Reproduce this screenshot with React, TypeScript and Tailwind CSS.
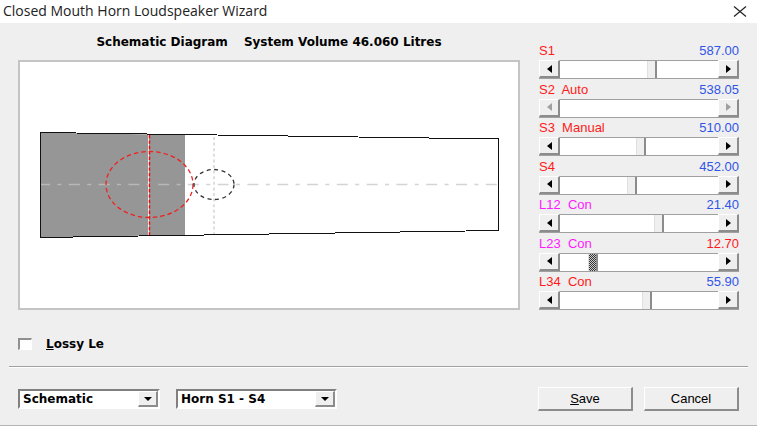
import React, { useState } from 'react';

type Param = {
    id: string;
    label: string;
    value: string;
    position: number;
    labelColor: string;
    valueColor: string;
    disabled?: boolean;
    focused?: boolean;
};

const params: Param[] = [
    { id: 's1', label: 'S1', value: '587.00', position: 590, labelColor: 'text-[#ff1a1a]', valueColor: 'text-[#2f55e8]' },
    { id: 's2', label: 'S2  Auto', value: '538.05', position: 0, labelColor: 'text-[#ff1a1a]', valueColor: 'text-[#2f55e8]', disabled: true },
    { id: 's3', label: 'S3  Manual', value: '510.00', position: 515, labelColor: 'text-[#ff1a1a]', valueColor: 'text-[#2f55e8]' },
    { id: 's4', label: 'S4', value: '452.00', position: 455, labelColor: 'text-[#ff1a1a]', valueColor: 'text-[#2f55e8]' },
    { id: 'l12', label: 'L12  Con', value: '21.40', position: 632, labelColor: 'text-[#ff1aff]', valueColor: 'text-[#2f55e8]' },
    { id: 'l23', label: 'L23  Con', value: '12.70', position: 192, labelColor: 'text-[#ff1aff]', valueColor: 'text-[#ff1a1a]', focused: true },
    { id: 'l34', label: 'L34  Con', value: '55.90', position: 557, labelColor: 'text-[#ff1a1a]', valueColor: 'text-[#2f55e8]' },
];

const raised = 'border-t border-l border-b-2 border-r-2 border-t-white border-l-white border-b-[#8c8c8c] border-r-[#8c8c8c] bg-[#efefef]';

const boldText = "font-['DejaVu_Sans',Verdana,sans-serif] text-[12px] font-bold";

const ArrowButton = ({ direction, label, disabled }: { direction: 'left' | 'right'; label: string; disabled?: boolean }) => (
    <button
        type="button"
        aria-label={label}
        disabled={disabled}
        className={`flex h-full w-[21px] shrink-0 items-center justify-center ${raised} ${disabled ? 'text-[#a0a0a0]' : 'text-black'}`}
    >
        <svg width="5" height="8" viewBox="0 0 5 8" fill="currentColor" aria-hidden="true">
            <path d={direction === 'left' ? 'M5 0v8L0 4z' : 'M0 0v8l5-4z'} />
        </svg>
    </button>
);

const ParamSlider = ({ param }: { param: Param }) => {
    const [position, setPosition] = useState(param.position);
    const thumb = param.focused
        ? '[&::-webkit-slider-thumb]:bg-[repeating-conic-gradient(#333_0_25%,#ccc_0_50%)] [&::-webkit-slider-thumb]:bg-size-[2px_2px]'
        : '[&::-webkit-slider-thumb]:bg-[#efefef]';

    return (
        <div>
            <div className="flex h-[19px] items-center justify-between text-[13px] leading-[19px]">
                <label htmlFor={param.id} className={`whitespace-pre ${param.labelColor}`}>{param.label}</label>
                <output htmlFor={param.id} className={param.valueColor}>{param.value}</output>
            </div>
            <div className="flex h-[19px] border-b border-[#a0a0a0]">
                <ArrowButton direction="left" label={`Decrease ${param.label}`} disabled={param.disabled} />
                <input
                    id={param.id}
                    type="range"
                    min={0}
                    max={1000}
                    value={position}
                    disabled={param.disabled}
                    onChange={(e) => setPosition(Number(e.target.value))}
                    className={`h-full min-w-0 flex-1 appearance-none border-t border-[#a0a0a0] bg-white [&::-webkit-slider-thumb]:h-[17px] [&::-webkit-slider-thumb]:w-[10px] [&::-webkit-slider-thumb]:appearance-none [&::-webkit-slider-thumb]:border-r-2 [&::-webkit-slider-thumb]:border-l [&::-webkit-slider-thumb]:border-l-[#e0e0e0] [&::-webkit-slider-thumb]:border-r-[#8c8c8c] disabled:[&::-webkit-slider-thumb]:opacity-0 ${thumb}`}
                />
                <ArrowButton direction="right" label={`Increase ${param.label}`} disabled={param.disabled} />
            </div>
        </div>
    );
};

const HornDiagram = () => (
    <svg viewBox="0 0 498 246" className="block w-full bg-white" role="img" aria-label="Horn schematic" fill="none">
        <path d="M20 70.5 L165 73 V173 L20 175.5z" fill="#969696" />
        {/* Axis and driver centre lines */}
        <path d="M20 122.5H165" stroke="#b8b8b8" strokeWidth="1.5" strokeDasharray="11 7.4 4 7.4" strokeDashoffset="1" />
        <path d="M165 122.5H478" stroke="#d4d4d4" strokeWidth="1.5" strokeDasharray="11 7.4 4 7.4" strokeDashoffset="27" />
        <path d="M194 75V172" stroke="#d4d4d4" strokeWidth="1.5" strokeDasharray="3 2.6" />
        {/* Horn outline */}
        <path d="M20.5 70.5 L478.5 77 V168.5 L20.5 175.5z" stroke="#111" shapeRendering="crispEdges" />
        <path d="M128.5 73V173" stroke="#f4f4f4" />
        <path d="M129.5 73V173" stroke="#ff0000" strokeWidth="1.4" strokeDasharray="3.4 2" />
        <ellipse cx="129.5" cy="122.5" rx="43.5" ry="33" stroke="#f02020" strokeWidth="1.3" strokeDasharray="4.5 3" />
        <ellipse cx="194" cy="122.5" rx="20" ry="15" stroke="#333" strokeWidth="1.3" strokeDasharray="4 3.5" />
    </svg>
);

const ComboBox = ({ label, options, width }: { label: string; options: string[]; width: string }) => (
    <div className={`relative h-5 ${width}`}>
        <select
            aria-label={label}
            className={`block h-full w-full appearance-none border-2 border-t-[#808080] border-r-white border-b-white border-l-[#808080] bg-white pl-[3px] leading-4 text-black ${boldText}`}
        >
            {options.map((option) => (
                <option key={option}>{option}</option>
            ))}
        </select>
        <span className={`pointer-events-none absolute top-0.5 right-0.5 flex h-4 w-5 items-center justify-center ${raised}`}>
            <svg width="8" height="4" viewBox="0 0 8 4" aria-hidden="true">
                <path d="M0 0h8L4 4z" />
            </svg>
        </span>
    </div>
);

const App = () => {
    return (
        <div className="min-h-screen border-b border-[#b4b4b4] bg-[#efefef] font-['Liberation_Sans',Arial,sans-serif] text-black">
            <header className="flex h-[23px] items-center justify-between bg-white pr-[10px] pl-[3px]">
                <h1 className="pb-0.5 font-['Open_Sans',sans-serif] text-[14px] leading-5 text-[#222]">Closed Mouth Horn Loudspeaker Wizard</h1>
                <button type="button" aria-label="Close" className="flex items-center">
                    <svg width="14" height="11" viewBox="0 0 14 11" stroke="#222" strokeWidth="1.2" aria-hidden="true">
                        <path d="M1 .5l12 10M13 .5l-12 10" />
                    </svg>
                </button>
            </header>

            <main className="flex gap-[19px] px-[18px]">
                <section className="min-w-0 flex-1">
                    <h2 className={`flex h-[37px] items-center justify-center gap-4 ${boldText}`}>
                        <span>Schematic Diagram</span>
                        <span>System Volume 46.060 Litres</span>
                    </h2>
                    <div className="border-2 border-[#c4c4c4]">
                        <HornDiagram />
                    </div>
                </section>
                <section className="flex w-[200px] shrink-0 flex-col justify-between pt-[18px]">
                    {params.map((param) => (
                        <ParamSlider key={param.id} param={param} />
                    ))}
                </section>
            </main>

            <div className="flex h-14 items-center gap-[14px] px-[18px] pt-3">
                <input
                    id="lossy"
                    type="checkbox"
                    className="h-3 w-[14px] appearance-none border-t-2 border-r border-b border-l-2 border-t-[#909090] border-r-white border-b-white border-l-[#909090] bg-white checked:bg-[#404040]"
                />
                <label htmlFor="lossy" className={`leading-4 ${boldText}`}>
                    <span className="underline">L</span>ossy Le
                </label>
            </div>

            <hr className="mx-[9px] border-t border-b border-t-[#a0a0a0] border-b-white" />

            <footer className="flex items-center px-[18px] pt-[19px] pb-[14px]">
                <div className="flex gap-4">
                    <ComboBox label="View" options={['Schematic']} width="w-[142px]" />
                    <ComboBox label="Section" options={['Horn S1 - S4']} width="w-[161px]" />
                </div>
                <div className="ml-auto flex gap-[11px]">
                    <button type="button" className={`h-6 w-[95px] text-[13px] leading-5 ${raised}`}>
                        <span className="underline">S</span>ave
                    </button>
                    <button type="button" className={`h-6 w-[95px] text-[13px] leading-5 ${raised}`}>Cancel</button>
                </div>
            </footer>
        </div>
    );
};

export default App;
